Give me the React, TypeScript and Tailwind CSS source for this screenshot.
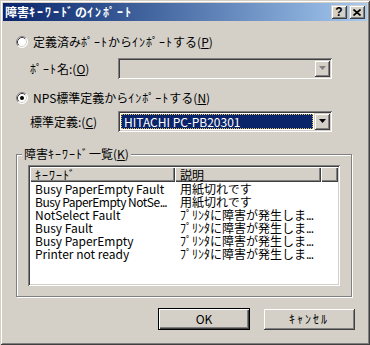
import React from "react";

// classic win2000-style import dialog

const rows: [string, string][] = [
  ["Busy PaperEmpty Fault", "用紙切れです"],
  ["Busy PaperEmpty NotSe", "用紙切れです"],
  ["NotSelect Fault", "ﾌﾟﾘﾝﾀに障害が発生しま"],
  ["Busy Fault", "ﾌﾟﾘﾝﾀに障害が発生しま"],
  ["Busy PaperEmpty", "ﾌﾟﾘﾝﾀに障害が発生しま"],
  ["Printer not ready", "ﾌﾟﾘﾝﾀに障害が発生しま"],
];

// half-width kana in Noto is narrower than the old bitmap font, pad it a bit
function K({ children, w = 1 }: { children: string; w?: number }) {
  return <span className={w === 2 ? "tracking-[2px]" : "tracking-[1px]"}>{children}</span>;
}

const Dots = () => <span className="tracking-[-1px]">...</span>;

function Radio({ checked }: { checked?: boolean }) {
  return (
    <svg width="12" height="12" viewBox="0 0 12 12" className="shrink-0">
      <circle cx="6" cy="6" r="5.5" fill="#fff" />
      <path d="M2.11 9.89A5.5 5.5 0 0 1 9.89 2.11" stroke="#808080" fill="none" />
      <path d="M9.89 2.11A5.5 5.5 0 0 1 2.11 9.89" stroke="#fff" fill="none" />
      <path d="M2.82 9.18A4.5 4.5 0 0 1 9.18 2.82" stroke="#404040" fill="none" />
      <path d="M9.18 2.82A4.5 4.5 0 0 1 2.82 9.18" stroke="#d4d0c8" fill="none" />
      {checked && <circle cx="6" cy="6" r="2" fill="#000" />}
    </svg>
  );
}

function Arrow({ disabled }: { disabled?: boolean }) {
  return (
    <div className="w-[16px] h-full bg-[#d4d0c8] shadow-[inset_1px_1px_#d4d0c8,inset_-1px_-1px_#404040,inset_2px_2px_#fff,inset_-2px_-2px_#808080] flex items-center justify-center">
      <svg width="7" height="5" viewBox="0 0 7 5">
        <path d="M0 0h7L3.5 4z" fill={disabled ? "#808080" : "#000"} />
      </svg>
    </div>
  );
}

export default function App() {
  return (
    <div className="w-[370px] h-[345px] p-[3px] flex flex-col bg-[#d4d0c8] text-black text-[12px] leading-[16px] font-['Noto_Sans_CJK_JP',sans-serif] shadow-[inset_1px_1px_#d4d0c8,inset_-1px_-1px_#404040,inset_2px_2px_#fff,inset_-2px_-2px_#808080]">
      <div className="h-[18px] flex items-center justify-between pl-[2px] pr-[2px] bg-gradient-to-r from-[#0a246a] to-[#a6caf0]">
        <span className="text-white font-bold">障害<K w={2}>ｷｰﾜｰﾄﾞ</K>の<K w={2}>ｲﾝﾎﾟｰﾄ</K></span>
        <div className="flex gap-[2px]">
          <div className="w-[16px] h-[14px] bg-[#d4d0c8] shadow-[inset_1px_1px_#d4d0c8,inset_-1px_-1px_#404040,inset_2px_2px_#fff,inset_-2px_-2px_#808080] flex items-center justify-center font-bold text-[12px] leading-none font-['Liberation_Sans',sans-serif]">?</div>
          <div className="w-[16px] h-[14px] bg-[#d4d0c8] shadow-[inset_1px_1px_#d4d0c8,inset_-1px_-1px_#404040,inset_2px_2px_#fff,inset_-2px_-2px_#808080] flex items-center justify-center">
            <svg width="8" height="7" viewBox="0 0 8 7">
              <path d="M0.5 0.5l7 6M7.5 0.5l-7 6" stroke="#000" strokeWidth="1.6" />
            </svg>
          </div>
        </div>
      </div>

      <div className="mt-[13px] h-[16px] pl-[13px] flex items-center gap-[5px]">
        <Radio />
        <span>定義済み<K>ﾎﾟｰﾄ</K>から<K>ｲﾝﾎﾟｰﾄ</K>する(<u>P</u>)</span>
      </div>

      <div className="mt-[8px] h-[21px] pl-[27px] flex items-center">
        <span className="w-[88px]"><K>ﾎﾟｰﾄ</K>名:(<u>O</u>)</span>
        <div className="w-[214px] h-full p-[2px] flex bg-[#d4d0c8] shadow-[inset_1px_1px_#808080,inset_-1px_-1px_#fff,inset_2px_2px_#404040,inset_-2px_-2px_#d4d0c8]">
          <div className="flex-1" />
          <Arrow disabled />
        </div>
      </div>

      <div className="mt-[11px] h-[16px] pl-[13px] flex items-center gap-[5px]">
        <Radio checked />
        <span>NPS標準定義から<K>ｲﾝﾎﾟｰﾄ</K>する(<u>N</u>)</span>
      </div>

      <div className="mt-[5px] h-[21px] pl-[27px] flex items-center">
        <span className="w-[88px]">標準定義:(<u>C</u>)</span>
        <div className="w-[214px] h-full p-[2px] flex bg-white shadow-[inset_1px_1px_#808080,inset_-1px_-1px_#fff,inset_2px_2px_#404040,inset_-2px_-2px_#d4d0c8]">
          <div className="flex-1 p-[1px]">
            <div className="h-full bg-[#0a246a] text-white pl-[2px] flex items-center border border-dotted border-[#e0c060]">HITACHI PC-PB20301</div>
          </div>
          <Arrow />
        </div>
      </div>

      <div className="mt-[22px] ml-[13px] w-[336px] h-[143px] relative border border-[#808080] shadow-[inset_1px_1px_#fff,1px_1px_#fff]">
        <span className="absolute -top-[9px] left-[5px] px-[2px] bg-[#d4d0c8]">障害<K>ｷｰﾜｰﾄﾞ</K>一覧(<u>K</u>)</span>
        <div className="mt-[10px] ml-[11px] w-[312px] h-[121px] p-[2px] bg-white shadow-[inset_1px_1px_#808080,inset_-1px_-1px_#fff,inset_2px_2px_#404040,inset_-2px_-2px_#d4d0c8]">
          <div className="h-[15px] flex leading-[15px]">
            <div className="w-[145px] pl-[5px] bg-[#d4d0c8] shadow-[inset_1px_1px_#fff,inset_-1px_-1px_#404040,inset_-2px_-2px_#808080]"><K>ｷｰﾜｰﾄﾞ</K></div>
            <div className="w-[146px] pl-[5px] bg-[#d4d0c8] shadow-[inset_1px_1px_#fff,inset_-1px_-1px_#404040,inset_-2px_-2px_#808080]">説明</div>
            <div className="flex-1 bg-[#d4d0c8] shadow-[inset_1px_1px_#fff,inset_-1px_-1px_#404040,inset_-2px_-2px_#808080]" />
          </div>
          {rows.map(([k, d], i) => (
            <div key={k} className="h-[13px] flex leading-[13px] whitespace-nowrap">
              <div className={i === 1 ? "w-[145px] pl-[5px] tracking-[-0.5px]" : "w-[145px] pl-[5px]"}>
                {k}
                {i === 1 && <Dots />}
              </div>
              <div className="w-[146px] pl-[5px]">
                {d}
                {i > 1 && <Dots />}
              </div>
            </div>
          ))}
        </div>
      </div>

      <div className="mt-[11px] ml-[155px] h-[22px] flex gap-[13px]">
        <button className="w-[92px] h-full border border-black bg-[#d4d0c8] shadow-[inset_1px_1px_#fff,inset_-1px_-1px_#404040,inset_-2px_-2px_#808080]">OK</button>
        <button className="w-[92px] h-full bg-[#d4d0c8] shadow-[inset_1px_1px_#d4d0c8,inset_-1px_-1px_#404040,inset_2px_2px_#fff,inset_-2px_-2px_#808080]"><K w={2}>ｷｬﾝｾﾙ</K></button>
      </div>
    </div>
  );
}
